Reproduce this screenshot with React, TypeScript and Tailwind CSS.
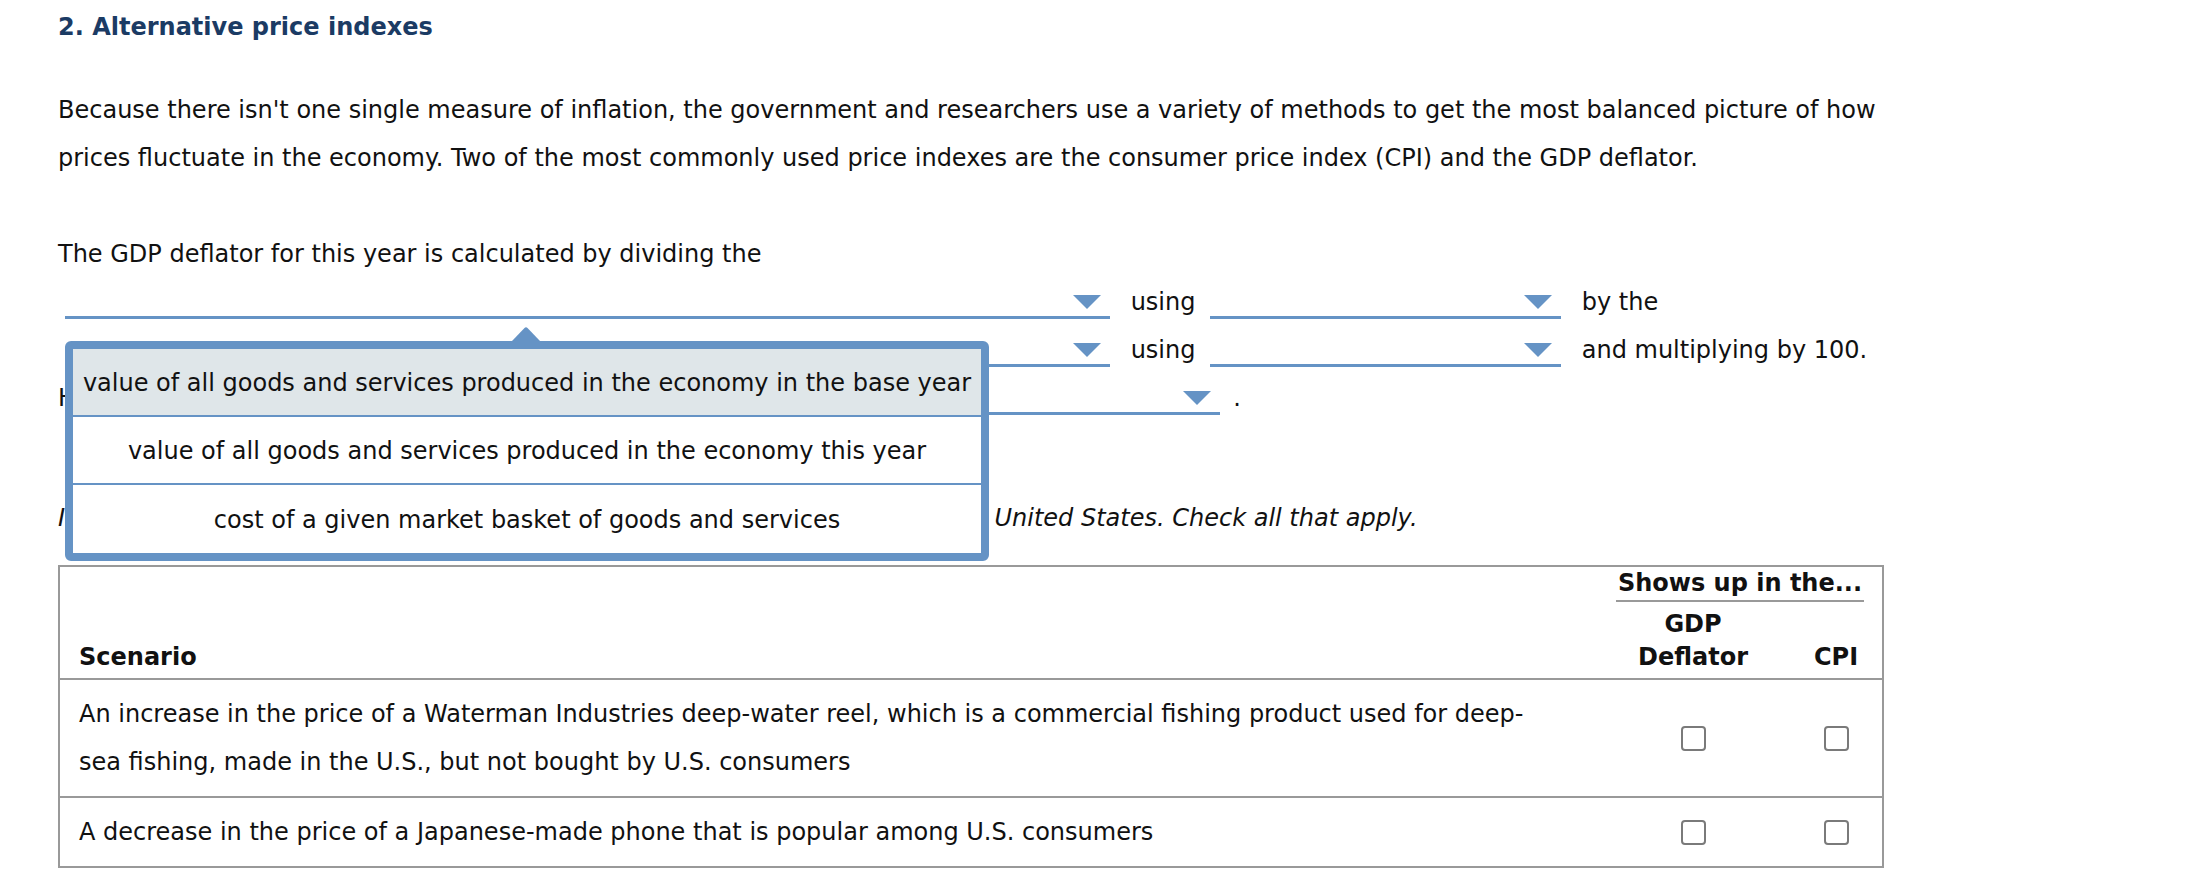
import React from "react";

const BLUE = "border-[#6593c5]";

function Triangle() {
  return (
    <svg width="28" height="14" viewBox="0 0 28 14" className="block">
      <path d="M0 0 L28 0 L14 14 Z" fill="#6593c5" />
    </svg>
  );
}

function Blank({ width, children }: { width: string; children?: React.ReactNode }) {
  return (
    <span
      className={`relative inline-flex align-top h-[41px] items-end justify-end pb-[7px] pr-[9px] border-b-[3px] ${BLUE} ml-[7px] mr-[13px] ${width}`}
    >
      <Triangle />
      {children}
    </span>
  );
}

const options = [
  "value of all goods and services produced in the economy in the base year",
  "value of all goods and services produced in the economy this year",
  "cost of a given market basket of goods and services",
];

function Popup() {
  return (
    <>
      {/* caret pointing at the open blank */}
      <svg width="28" height="14" viewBox="0 0 28 14" className="absolute left-[447px] top-[49px] z-10">
        <path d="M0 14 L12.5 1 Q14 -0.5 15.5 1 L28 14 Z" fill="#6593c5" />
      </svg>
      <span className="absolute left-0 top-[63px] z-10 block w-[924px] rounded-[6px] border-[8px] border-[#6593c5] bg-white not-italic text-[#111]">
        {options.map((opt, i) => (
          <span
            key={opt}
            className={`flex h-[68px] items-center justify-center whitespace-nowrap pt-[2px] ${i === 0 ? "bg-[#dfe6e9]" : "bg-white"} ${i < options.length - 1 ? "border-b-2 border-[#6593c5]" : ""}`}
          >
            {opt}
          </span>
        ))}
      </span>
    </>
  );
}

function Box() {
  return <span className="block h-[25px] w-[25px] rounded-[4px] border-2 border-[#7a7a7a] bg-white" />;
}

const rows = [
  <>
    An increase in the price of a Waterman Industries deep-water reel, which is a commercial fishing product used for deep-
    <br />
    sea fishing, made in the U.S., but not bought by U.S. consumers
  </>,
  <>A decrease in the price of a Japanese-made phone that is popular among U.S. consumers</>,
];

export default function App() {
  return (
    <div className="min-h-screen bg-white">
      <div className="w-[1884px] pl-[58px] pt-[3px] font-['DejaVu_Sans',sans-serif] text-[24px] leading-[48px] text-[#111]">
        <h2 className="font-bold text-[#1b3b64]">2. Alternative price indexes</h2>

        <p className="mt-[35px]">
          Because there isn't one single measure of inflation, the government and researchers use a variety of methods to get the most balanced picture of how
          <br />
          prices fluctuate in the economy. Two of the most commonly used price indexes are the consumer price index (CPI) and the GDP deflator.
        </p>

        <div className="mt-[48px]">
          The GDP deflator for this year is calculated by dividing the
          <br />
          <Blank width="w-[1045px]">
            <Popup />
          </Blank>{" "}
          using <Blank width="w-[351px]" /> by the
          <br />
          <Blank width="w-[1045px]" /> using <Blank width="w-[351px]" /> and multiplying by 100.
          <br />
          Hence, the GDP deflator measures the prices of <Blank width="w-[574px]" />.
        </div>

        <p className="mt-[72px] italic">
          Identify whether each of the following goods affects the price indexes for the United States. Check all that apply.
        </p>

        <div className="mt-[23px] border-2 border-[#999]">
          <div className="flex items-end border-b-2 border-[#999] pb-[4px] font-bold leading-[33px]">
            <div className="flex-1 pl-[19px]">Scenario</div>
            <div className="w-[266px]">
              <div className="mr-[18px] border-b-2 border-[#999] text-center">Shows up in the...</div>
              <div className="mt-[6px] flex items-end">
                <div className="w-[154px] text-center">
                  GDP
                  <br />
                  Deflator
                </div>
                <div className="w-[112px] pl-[20px] text-center">CPI</div>
              </div>
            </div>
          </div>
          {rows.map((content, i) => (
            <div key={i} className={`flex items-center ${i < rows.length - 1 ? "border-b-2 border-[#999]" : ""}`}>
              <div className="flex-1 py-[10px] pl-[19px]">{content}</div>
              <div className="flex w-[154px] justify-center">
                <Box />
              </div>
              <div className="flex w-[112px] justify-center pl-[20px]">
                <Box />
              </div>
            </div>
          ))}
        </div>
      </div>
    </div>
  );
}
